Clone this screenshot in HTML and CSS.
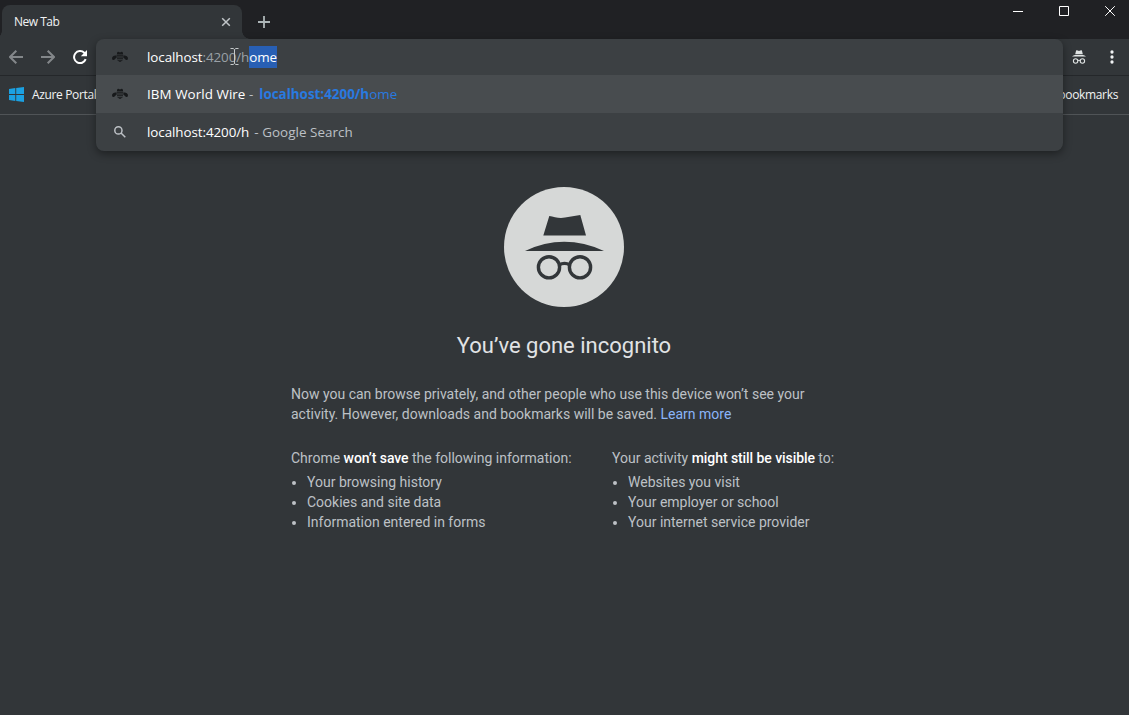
FILE: index.html
```html
<!DOCTYPE html>
<html lang="en">
<head>
<meta charset="utf-8">
<title>New Tab</title>
<link rel="stylesheet" href="styles.css">
</head>
<body>
<svg class="defs" aria-hidden="true">
  <symbol id="bee" viewBox="0 0 16 12">
    <path d="M5 2.2Q5.3.6 6.6.8L7 1.2H9L9.4.8Q10.7.6 11 2.2V3H5zM4.8 3.6H11.2V4.8H4.8zM5 5.4H11V6.6H5zM5 7.2H11V8.3H5zM5.6 8.9H10.4V9.8H5.6zM6.8 10.3H9.2V11H6.8z"/>
    <path d="M4.6 4.6Q1.5 3.9.4 6Q-.5 8.2 1 9Q2.3 9.3 3 8L4.7 6.4zM11.4 4.6Q14.5 3.9 15.6 6Q16.5 8.2 15 9Q13.7 9.3 13 8L11.3 6.4z"/>
  </symbol>
</svg>
<div class="browser">
  <header class="tabstrip">
    <div class="tab">
      <span class="tab-title">New Tab</span>
      <svg class="tab-close" viewBox="0 0 10 10"><path d="M1.2 1.2l7.6 7.6M8.8 1.2L1.2 8.8"/></svg>
    </div>
    <svg class="new-tab" viewBox="0 0 12 12"><path d="M6 0v12M0 6h12"/></svg>
    <div class="window-controls">
      <svg viewBox="0 0 10 10"><path d="M0 5.5h10"/></svg>
      <svg viewBox="0 0 10 10"><path d="M.5.5h9v9h-9z"/></svg>
      <svg viewBox="0 0 10 10"><path d="M.2.2l9.6 9.6M9.8.2L.2 9.8"/></svg>
    </div>
  </header>
  <nav class="toolbar">
    <svg class="nav-icon dim" viewBox="0 0 14 14"><path d="M14 7H1M7.3.7L1 7l6.3 6.3"/></svg>
    <svg class="nav-icon dim" viewBox="0 0 14 14"><path d="M0 7h13M6.7.7L13 7l-6.3 6.3"/></svg>
    <svg class="nav-icon" viewBox="0 0 14 14"><path d="M12.7 9.2A6 6 0 1 1 11.3 2.8L12.5 4"/><path class="solid" d="M14 0v6.2H7.8z"/></svg>
    <div class="toolbar-end">
      <svg class="incognito-small" viewBox="0 0 14 14"><path class="hat" d="M3.2 4.2L4.1.5Q5 0 5.7.6L7 1 8.3.6Q9.1 0 9.9.5L10.8 4.2zM0 6.5Q1.5 5 3 5h8q1.5 0 3 1.5z"/><circle cx="3.6" cy="11" r="2.2"/><circle cx="10.4" cy="11" r="2.2"/><path d="M5.7 10.6Q7 9.8 8.3 10.6"/></svg>
      <svg class="menu-dots" viewBox="0 0 4 14"><circle cx="2" cy="2" r="1.65"/><circle cx="2" cy="7" r="1.65"/><circle cx="2" cy="12" r="1.65"/></svg>
    </div>
  </nav>
  <div class="bookmarks">
    <svg class="windows-logo" viewBox="0 0 15 15"><path d="M0 2L6.3 1.1V7H0zM7.2 1L15 0V7H7.2zM0 8H6.3V13.9L0 13zM7.2 8H15V15L7.2 14z"/></svg>
    <span class="bookmark-name">Azure Portal</span>
    <span class="bookmark-other">bookmarks</span>
  </div>
  <section class="omnibox">
    <div class="row input">
      <svg class="bee"><use href="#bee"/></svg>
      <span class="host">localhost<span class="path">:4200/h</span><mark>ome</mark></span>
      <svg class="ibeam" viewBox="0 0 9 17"><path d="M.5.5h2.7l1.3 1 1.3-1h2.7M4.5 1.5v14M.5 16.5h2.7l1.3-1 1.3 1h2.7"/></svg>
    </div>
    <div class="row selected">
      <svg class="bee"><use href="#bee"/></svg>
      <span class="site">IBM World Wire <i>-</i></span><span class="url"><b>localhost:4200/h</b><span class="rest">ome</span></span>
    </div>
    <div class="row search">
      <svg class="magnifier" viewBox="0 0 12 12"><circle cx="4.4" cy="4.4" r="3.6"/><path d="M7 7l4.3 4.3"/></svg>
      <span class="query">localhost:4200/h</span><span class="engine">- Google Search</span>
    </div>
  </section>
  <main class="page">
    <svg class="incognito" viewBox="0 0 120 120">
      <circle class="disc" cx="60" cy="60" r="60"/>
      <path class="ink" d="M45.3 29Q48 29.2 51 30.2Q56 31.4 61 30.6L76.3 28L82 48.5H39.3zM21 64Q60 45.7 100 64z"/>
      <g class="glasses"><circle cx="45" cy="80.3" r="10.6"/><circle cx="76" cy="80.3" r="10.6"/><path d="M55 78Q60.5 74.8 66 78"/></g>
    </svg>
    <h1>You’ve gone incognito</h1>
    <p class="intro">Now you can browse privately, and other people who use this device won’t see your<br>activity. However, downloads and bookmarks will be saved. <a>Learn more</a></p>
    <div class="columns">
      <div><p>Chrome <em>won’t save</em> the following information:</p>
        <ul><li>Your browsing history</li><li>Cookies and site data</li><li>Information entered in forms</li></ul></div>
      <div><p>Your activity <em>might still be visible</em> to:</p>
        <ul><li>Websites you visit</li><li>Your employer or school</li><li>Your internet service provider</li></ul></div>
    </div>
  </main>
</div>
</body>
</html>
```
FILE: styles.css
```css
* { box-sizing: border-box; }
body { margin: 0; overflow: hidden; background: #323639; font-family: "Open Sans", "Noto Sans", sans-serif; }
svg { display: block; flex: none; fill: none; }
.defs { display: none; }
.browser { position: relative; height: 715px; display: flex; flex-direction: column; }

.tabstrip { height: 39px; background: #202124; display: flex; padding: 5px 14px 0 2px; }
.tab { position: relative; width: 240px; height: 34px; border-radius: 8px 8px 0 0; background: #323639; display: flex; align-items: center; justify-content: space-between; padding: 0 11px 0 12px; }
.tab::before, .tab::after { content: ""; position: absolute; bottom: 0; width: 8px; height: 8px; }
.tab::before { left: -8px; background: radial-gradient(circle at 0 0, #202124 7.5px, #323639 8px); }
.tab::after { right: -8px; background: radial-gradient(circle at 100% 0, #202124 7.5px, #323639 8px); }
.tab-title { font-size: 12px; letter-spacing: -.5px; padding-bottom: 2px; color: #f1f3f4; }
.tab-close { width: 10px; height: 10px; stroke: #c0c5c8; stroke-width: 1.5; }
.new-tab { width: 12px; height: 12px; margin: 11px 0 0 16px; stroke: #adb5b7; stroke-width: 1.8; }
.window-controls { margin-left: auto; display: flex; gap: 36px; padding-top: 1px; }
.window-controls svg { width: 10px; height: 10px; stroke: #fff; stroke-width: 1; }

.toolbar { height: 37px; border-bottom: 1px solid #24272a; display: flex; align-items: center; padding: 0 15.5px 0 9px; gap: 18px; }
.nav-icon { width: 14px; height: 14px; stroke: #fff; stroke-width: 2; }
.nav-icon.dim { stroke: #83878a; }
.nav-icon .solid { fill: #fff; stroke: none; }
.toolbar-end { margin-left: auto; display: flex; align-items: center; gap: 23.5px; }
.incognito-small { width: 14px; height: 14px; stroke: #dfe3e3; stroke-width: 1.1; }
.incognito-small .hat { fill: #dfe3e3; stroke: none; }
.menu-dots { width: 4px; height: 14px; fill: #f1f3f4; }

.bookmarks { height: 39px; border-bottom: 1px solid #505457; display: flex; align-items: center; padding: 0 11px 2px 9px; font-size: 12px; color: #f1f3f4; }
.windows-logo { width: 15px; height: 15px; fill: #1ba1e2; margin-right: 8px; }
.bookmark-name { letter-spacing: -.35px; }
.bookmark-other { margin-left: auto; letter-spacing: -.35px; }

.omnibox { position: absolute; left: 96px; top: 39px; width: 967px; height: 112px; border-radius: 8px; overflow: hidden; background: #3c4043; font-size: 13.4px; color: #fff; box-shadow: 0 3px 9px rgba(0,0,0,.4); }
.row { display: flex; align-items: center; height: 38px; padding-left: 16px; white-space: pre; }
.row.input { position: relative; height: 36px; }
.row.selected { background: #484c4f; }
.bee { width: 16px; height: 12px; margin-right: 19px; fill: #17191b; }
.host { letter-spacing: -.07px; }
.path { color: #9aa0a6; }
mark { display: inline-block; height: 22px; line-height: 22px; background: #285fb4; color: #fff; }
.ibeam { position: absolute; left: 134px; top: 9px; width: 9px; height: 17px; stroke: #c4c8ca; stroke-width: 1; }
.site { letter-spacing: .06px; }
.site i { font-style: normal; color: #bdc1c6; }
.url { margin-left: 6px; color: #287ae0; }
.rest { letter-spacing: .1px; }
.magnifier { width: 12px; height: 12px; margin: 0 21px 0 2px; stroke: #bdc1c6; stroke-width: 1.5; }
.query { letter-spacing: -.07px; }
.engine { margin-left: 5px; letter-spacing: .06px; color: #bdc1c6; }

.page { width: 546px; margin: 72px 0 0 291px; font: 14px/20px Roboto, sans-serif; color: #bdc1c6; }
.incognito { width: 120px; height: 120px; margin-left: 213px; }
.disc { fill: #d6d8d7; }
.ink { fill: #323639; }
.glasses { stroke: #323639; stroke-width: 3.4; }
h1 { width: 546px; margin: 24px 0 0; font-size: 22px; line-height: 29px; font-weight: 400; text-align: center; color: #e1e3e5; }
.page p { margin: 0; white-space: nowrap; }
.page .intro { margin-top: 24px; }
a { color: #8ab4f8; }
.columns { display: grid; grid-template-columns: 321px 1fr; margin-top: 24px; }
em { font-style: normal; font-weight: 500; letter-spacing: -.07px; color: #fff; }
ul { margin: 4px 0 0; padding-left: 16px; }
```
